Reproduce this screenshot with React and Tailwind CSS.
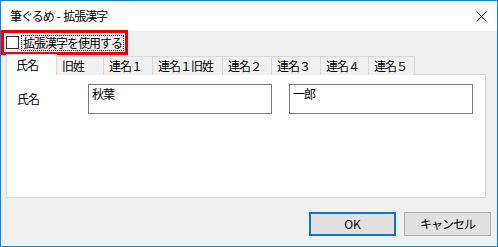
import React from 'react';

const tabs = [
  { label: '氏名', w: 'w-[51px]', active: true },
  { label: '旧姓', w: 'w-[47px]' },
  { label: '連名１', w: 'w-[50px]' },
  { label: '連名１旧姓', w: 'w-[71px]' },
  { label: '連名２', w: 'w-[50px]' },
  { label: '連名３', w: 'w-[50px]' },
  { label: '連名４', w: 'w-[49px]' },
  { label: '連名５', w: 'w-[47px]' },
];

const font = { fontFamily: '"Noto Sans CJK JP", "Liberation Sans", sans-serif' };

export default function App() {
  return (
    <div
      className="w-[498px] h-[247px] border border-[#1883d7] bg-[#f0f0f0] flex flex-col text-[12px] leading-none tracking-[-1px] text-black overflow-hidden"
      style={font}
    >
      {/* タイトルバー */}
      <div className="h-[30px] bg-white flex items-center justify-between pl-[9px] pr-[10px] shrink-0">
        <span>
          筆ぐるめ<span className="tracking-normal whitespace-pre"> - </span>拡張漢字
        </span>
        <svg width="11" height="11" viewBox="0 0 11 11">
          <path d="M0.5 0.5 L10.5 10.5 M10.5 0.5 L0.5 10.5" stroke="#000" strokeWidth="1" />
        </svg>
      </div>

      {/* 拡張漢字チェック */}
      <div className="-mt-px h-[25px] w-[127px] border-[3px] border-[#ee0000] flex items-center shrink-0">
        <div className="ml-[2px] w-[13px] h-[13px] border border-[#333] bg-white shrink-0" />
        <div className="ml-[2px] h-[16px] border border-dotted border-black flex items-center pl-[1px] pr-[1px]">
          拡張漢字を使用する
        </div>
      </div>

      {/* タブ */}
      <div className="flex items-end h-[20px] ml-[5px] relative z-10 -mb-px shrink-0">
        {tabs.map((t, i) =>
          t.active ? (
            <div
              key={t.label}
              className={`${t.w} h-[21px] bg-white border border-b-0 border-[#d9d9d9] flex items-center pl-[9px]`}
            >
              {t.label}
            </div>
          ) : (
            <div
              key={t.label}
              className={`${t.w} h-[19px] -ml-px border border-b-0 border-[#d9d9d9] bg-[#f0f0f0] flex items-center pl-[5px] ${i === 1 ? 'border-l-0 ml-0' : ''}`}
            >
              {t.label}
            </div>
          )
        )}
      </div>

      {/* タブパネル */}
      <div className="mx-[5px] w-[480px] h-[124px] bg-white border border-[#d9d9d9] shrink-0">
        <div className="flex items-start pt-[9px] pl-[10px]">
          <div className="w-[71px] h-[30px] flex items-center">氏名</div>
          <div className="w-[184px] h-[30px] border border-[#7a7a7a] bg-white pl-[3px] pt-[3px]">秋葉</div>
          <div className="ml-[17px] w-[184px] h-[30px] border border-[#7a7a7a] bg-white pl-[3px] pt-[3px]">一郎</div>
        </div>
      </div>

      {/* ボタン */}
      <div className="flex justify-end gap-[8px] mt-[14px] pr-[6px]">
        <button className="w-[87px] h-[24px] bg-[#e1e1e1] border-2 border-[#0078d7] flex items-center justify-center tracking-normal">
          OK
        </button>
        <button className="w-[87px] h-[24px] bg-[#e1e1e1] border border-[#adadad] flex items-center justify-center">
          キャンセル
        </button>
      </div>
    </div>
  );
}
